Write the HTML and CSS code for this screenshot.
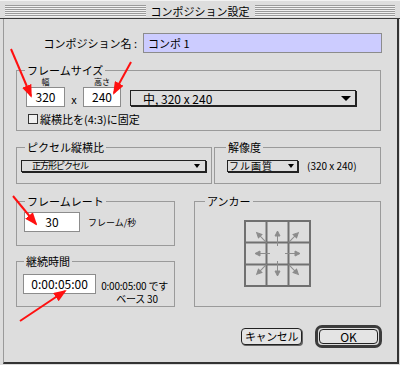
FILE: index.html
```html
<!DOCTYPE html>
<html lang="ja">
<head>
    <meta charset="UTF-8">
    <meta name="viewport" content="width=device-width, initial-scale=1.0">
    <title>コンポジション設定</title>
    <link rel="stylesheet" href="styles.css">
</head>
<body>
    <div class="window">
        <div class="titlebar">
            <div class="stripes"><span class="title">コンポジション設定</span></div>
        </div>
        <div class="frame">
            <div class="panel">
                <div class="name-row">
                    <span class="name-label">コンポジション名 :</span>
                    <div class="name-field">コンポ 1</div>
                </div>

                <fieldset class="group frame-size">
                    <legend>フレームサイズ</legend>
                    <div class="size-row">
                        <div class="size-col w-col">
                            <span class="tiny">幅</span>
                            <div class="field w-field">320</div>
                        </div>
                        <span class="times">x</span>
                        <div class="size-col">
                            <span class="tiny">高さ</span>
                            <div class="field h-field">240</div>
                        </div>
                        <div class="popup size-popup"><span>中, 320 x 240</span><span class="tri"></span></div>
                    </div>
                    <div class="check-row">
                        <span class="checkbox"></span>
                        <span>縦横比を(4:3)に固定</span>
                    </div>
                </fieldset>

                <div class="two-col">
                    <fieldset class="group pixel">
                        <legend>ピクセル縦横比</legend>
                        <div class="popup small-popup pixel-popup"><span>正方形ピクセル</span><span class="tri small"></span></div>
                    </fieldset>
                    <fieldset class="group resolution">
                        <legend>解像度</legend>
                        <div class="res-row">
                            <div class="popup small-popup res-popup"><span class="res-text">フル画質</span><span class="tri small"></span></div>
                            <span class="res-size">(320 x 240)</span>
                        </div>
                    </fieldset>
                </div>

                <div class="bottom-grid">
                    <div class="left-col">
                        <fieldset class="group rate">
                            <legend>フレームレート</legend>
                            <div class="rate-row">
                                <div class="field rate-field">30</div>
                                <span class="rate-unit">フレーム/秒</span>
                            </div>
                        </fieldset>
                        <fieldset class="group duration">
                            <legend>継続時間</legend>
                            <div class="duration-row">
                                <div class="field duration-field">0:00:05:00</div>
                                <div class="duration-info">
                                    <div>0:00:05:00 です</div>
                                    <div class="base">ベース 30</div>
                                </div>
                            </div>
                        </fieldset>
                    </div>
                    <fieldset class="group anchor">
                        <legend>アンカー</legend>
                        <svg class="anchor-grid" width="67" height="67" viewBox="0 0 67 67">
                            <defs>
                                <g id="arrow-s">
                                    <line x1="33.5" y1="26" x2="33.5" y2="15"/>
                                    <polygon points="33.5,11 31,16 36,16"/>
                                </g>
                                <g id="arrow-d">
                                    <line x1="33.5" y1="18" x2="33.5" y2="8"/>
                                    <polygon points="33.5,4 31,9 36,9"/>
                                </g>
                            </defs>
                            <g stroke="#707070" stroke-width="2" fill="none">
                                <rect x="1" y="1" width="65" height="65"/>
                                <line x1="22.5" y1="1" x2="22.5" y2="66"/>
                                <line x1="44.5" y1="1" x2="44.5" y2="66"/>
                                <line x1="1" y1="22.5" x2="66" y2="22.5"/>
                                <line x1="1" y1="44.5" x2="66" y2="44.5"/>
                            </g>
                            <g fill="#8c8c8c" stroke="#8c8c8c" stroke-width="1">
                                <use href="#arrow-s"/>
                                <use href="#arrow-s" transform="rotate(90 33.5 33.5)"/>
                                <use href="#arrow-s" transform="rotate(180 33.5 33.5)"/>
                                <use href="#arrow-s" transform="rotate(270 33.5 33.5)"/>
                                <use href="#arrow-d" transform="rotate(45 33.5 33.5)"/>
                                <use href="#arrow-d" transform="rotate(135 33.5 33.5)"/>
                                <use href="#arrow-d" transform="rotate(225 33.5 33.5)"/>
                                <use href="#arrow-d" transform="rotate(315 33.5 33.5)"/>
                            </g>
                        </svg>
                    </fieldset>
                </div>

                <div class="buttons">
                    <button class="btn cancel">キャンセル</button>
                    <div class="default-ring"><button class="btn ok">OK</button></div>
                </div>
            </div>
        </div>

        <!-- red callout arrows drawn over the dialog -->
        <svg class="callouts" width="400" height="365" viewBox="0 0 400 365">
            <defs>
                <marker id="head" markerWidth="13" markerHeight="10" refX="11" refY="5" orient="auto" markerUnits="userSpaceOnUse">
                    <path d="M0,0 L13,5 L0,10 Z" fill="#ff1010"/>
                </marker>
            </defs>
            <g stroke="#ff1010" stroke-width="2" marker-end="url(#head)">
                <line x1="11" y1="49" x2="31" y2="96"/>
                <line x1="131" y1="62" x2="114" y2="93"/>
                <line x1="13" y1="196" x2="36" y2="224"/>
                <line x1="20" y1="321" x2="65" y2="291"/>
            </g>
        </svg>
    </div>
</body>
</html>
```

FILE: styles.css
```css
body {
    margin: 0;
    background-color: #dddddd;
    font-family: "Noto Sans CJK JP", sans-serif;
    font-size: 11px;
    color: #000;
}
.window {
    position: relative;
    width: 400px;
    height: 365px;
    display: flex;
    flex-direction: column;
    background: #dddddd;
}
.titlebar {
    height: 19px;
    border-bottom: 1px solid #3a3a3a;
    padding: 4px 5px 0 5px;
    box-sizing: border-box;
    border-top: 1px solid #f2f2f2;
}
.stripes {
    height: 12px;
    display: flex;
    justify-content: center;
    background: repeating-linear-gradient(to bottom, #9a9a9a 0 1px, #f0f0f0 1px 2px);
}
.title {
    background: #dddddd;
    padding: 0 5px;
    line-height: 12px;
    font-size: 11px;
}
.frame {
    flex: 1;
    display: flex;
    padding: 0 1px 1px 3px;
}
.panel {
    flex: 1;
    border-left: 1px solid #9a9a9a;
    border-right: 2px solid #333;
    border-bottom: 2px solid #333;
    padding: 0 16px 0 12px;
}
.name-row {
    display: flex;
    justify-content: flex-end;
    align-items: center;
    gap: 6px;
    margin: 14px -1px 0 0;
}
.name-field {
    width: 239px;
    height: 20px;
    box-sizing: border-box;
    background: #ccccff;
    border: 1px solid #8c8c8c;
    font-size: 11px;
    line-height: 18px;
    padding-left: 4px;
}
.group {
    margin: 0;
    min-width: 0;
    border: 1px solid #9a9a9a;
}
legend {
    padding: 0 2px;
    line-height: 14px;
    font-size: 11px;
}
.field {
    height: 20px;
    box-sizing: border-box;
    background: #fff;
    border: 1px solid #8c8c8c;
    font-size: 12px;
    line-height: 18px;
    text-align: center;
}
.frame-size {
    margin-top: 10px;
    padding: 0 8px 4px 8px;
}
.size-row {
    display: flex;
    align-items: flex-end;
}
.size-col {
    display: flex;
    flex-direction: column;
    align-items: center;
}
.w-col {
    margin-left: 1px;
}
.tiny {
    font-size: 8px;
    line-height: 10px;
}
.w-field {
    width: 39px;
}
.h-field {
    width: 38px;
}
.times {
    width: 18px;
    text-align: center;
    line-height: 16px;
}
.popup {
    display: flex;
    align-items: center;
    justify-content: space-between;
    box-sizing: border-box;
    border: 1px solid #222;
    box-shadow: 1px 1px 0 #222;
    background: #dddddd;
}
.size-popup {
    width: 226px;
    height: 16px;
    margin: 0 0 1px 9px;
    padding: 0 4px 0 12px;
    font-size: 12px;
}
.tri {
    width: 0;
    height: 0;
    border-left: 5px solid transparent;
    border-right: 5px solid transparent;
    border-top: 5px solid #000;
}
.tri.small {
    border-left-width: 3px;
    border-right-width: 3px;
    border-top-width: 4px;
}
.check-row {
    display: flex;
    align-items: center;
    gap: 2px;
    margin-top: 5px;
    line-height: 14px;
}
.checkbox {
    width: 10px;
    height: 10px;
    box-sizing: border-box;
    margin-left: 3px;
    border: 1px solid #333;
    background: #f0f0f0;
}
.two-col {
    display: grid;
    grid-template-columns: 196px 1fr;
    column-gap: 2px;
    margin-top: 9px;
}
.pixel {
    padding: 6px 3px 11px 4px;
}
.pixel legend {
    margin-left: 4px;
}
.small-popup {
    height: 12px;
    font-size: 9px;
    line-height: 10px;
}
.pixel-popup {
    width: 185px;
    padding: 0 5px 0 10px;
    letter-spacing: -1px;
}
.resolution {
    padding: 6px 4px 11px 12px;
}
.resolution legend {
    margin-left: -1px;
}
.res-row {
    display: flex;
    align-items: center;
}
.res-popup {
    width: 71px;
    padding: 0 3px 0 1px;
}
.res-text {
    font-size: 10px;
    letter-spacing: 1px;
}
.res-size {
    margin-left: 9px;
    font-size: 10px;
    line-height: 12px;
}
.bottom-grid {
    display: grid;
    grid-template-columns: 159px 1fr;
    column-gap: 19px;
    margin-top: 10px;
}
.left-col {
    display: flex;
    flex-direction: column;
    gap: 8px;
}
.rate {
    padding: 4px 8px 13px 7px;
}
.rate legend,
.duration legend {
    margin-left: 1px;
}
.rate-row {
    display: flex;
    align-items: center;
}
.rate-field {
    width: 56px;
}
.rate-unit {
    margin-left: 8px;
    font-size: 9px;
}
.duration {
    padding: 6px 6px 1px 6px;
}
.duration-row {
    display: flex;
    align-items: flex-start;
}
.duration-field {
    width: 75px;
}
.duration-info {
    margin: 5px 0 0 5px;
    font-size: 10px;
    line-height: 13px;
    white-space: nowrap;
    letter-spacing: -0.2px;
}
.base {
    padding-left: 15px;
}
.anchor {
    padding: 12px 10px 0 10px;
}
.anchor-grid {
    display: block;
    margin-left: 39px;
}
.buttons {
    display: flex;
    justify-content: flex-end;
    align-items: center;
    gap: 13px;
    margin: 18px -1px 0 0;
}
.btn {
    font-family: "Noto Sans CJK JP", sans-serif;
    color: #000;
    background: #e4e4e4;
    border: 1px solid #222;
    border-radius: 4px;
    padding: 0;
    box-sizing: border-box;
}
.cancel {
    width: 61px;
    height: 17px;
    font-size: 11px;
    line-height: 15px;
    letter-spacing: -0.4px;
    box-shadow: 1px 1px 0 #666;
}
.default-ring {
    border: 3px solid #3c3c3c;
    border-radius: 7px;
    padding: 1px;
}
.ok {
    display: block;
    width: 59px;
    height: 15px;
    font-size: 12px;
    line-height: 13px;
}
.callouts {
    position: absolute;
    top: 0;
    left: 0;
    pointer-events: none;
}
```
